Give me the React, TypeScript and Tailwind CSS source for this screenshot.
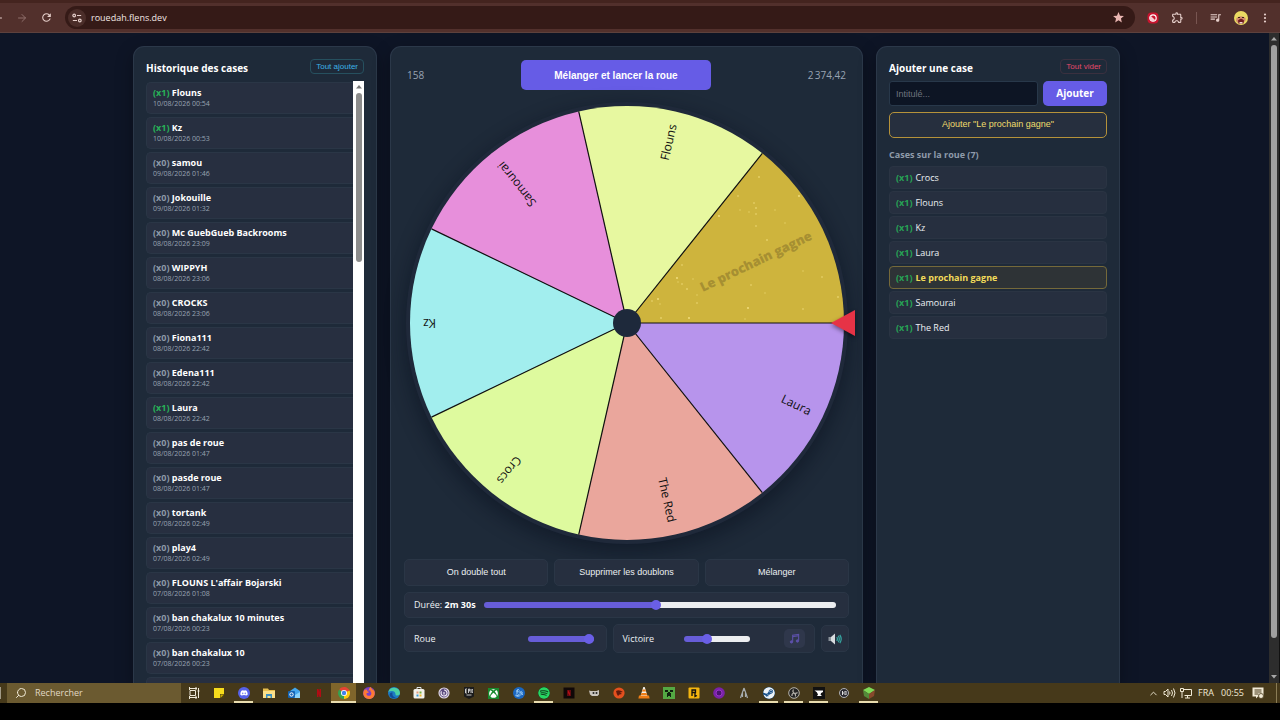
import { useState } from "react";
import type { ReactNode } from "react";
import { ArrowLeft, ArrowRight, ChevronUp, EllipsisVertical, Search } from "lucide-react";
import { FaBattleNet, FaDiscord, FaFirefoxBrowser, FaSpotify, FaSteam, FaXbox } from "react-icons/fa6";
import { MdOutlineExtension, MdQueueMusic, MdRefresh, MdStar } from "react-icons/md";

type HistoryEntry = { count: number; name: string; date: string };

const history: HistoryEntry[] = [
  { count: 1, name: "Flouns", date: "10/08/2026 00:54" },
  { count: 1, name: "Kz", date: "10/08/2026 00:53" },
  { count: 0, name: "samou", date: "09/08/2026 01:46" },
  { count: 0, name: "Jokouille", date: "09/08/2026 01:32" },
  { count: 0, name: "Mc GuebGueb Backrooms", date: "08/08/2026 23:09" },
  { count: 0, name: "WIPPYH", date: "08/08/2026 23:06" },
  { count: 0, name: "CROCKS", date: "08/08/2026 23:06" },
  { count: 0, name: "Fiona111", date: "08/08/2026 22:42" },
  { count: 0, name: "Edena111", date: "08/08/2026 22:42" },
  { count: 1, name: "Laura", date: "08/08/2026 22:42" },
  { count: 0, name: "pas de roue", date: "08/08/2026 01:47" },
  { count: 0, name: "pasde roue", date: "08/08/2026 01:47" },
  { count: 0, name: "tortank", date: "07/08/2026 02:49" },
  { count: 0, name: "play4", date: "07/08/2026 02:49" },
  { count: 0, name: "FLOUNS L'affair Bojarski", date: "07/08/2026 01:08" },
  { count: 0, name: "ban chakalux 10 minutes", date: "07/08/2026 00:23" },
  { count: 0, name: "ban chakalux 10", date: "07/08/2026 00:23" }
];

const GOLD = "Le prochain gagne";

const entries = ["Crocs", "Flouns", "Kz", "Laura", GOLD, "Samourai", "The Red"];

// clockwise, starting at the pointer
const slices = [
  { label: "Laura", color: "#b794ec" },
  { label: "The Red", color: "#eaa69c" },
  { label: "Crocs", color: "#defa9e" },
  { label: "Kz", color: "#a2eeee" },
  { label: "Samourai", color: "#e78fdb" },
  { label: "Flouns", color: "#e7f8a0" },
  { label: GOLD, color: "#ceb43d" }
];

const sparkles = [
  [349, 71], [328, 90], [330, 104], [309, 110], [339, 106], [344, 97], [346, 102], [346, 108], [365, 104],
  [389, 90], [375, 117], [346, 120], [357, 134], [272, 159], [268, 176], [267, 172], [283, 173], [272, 178],
  [277, 183], [287, 197], [287, 189], [248, 193], [250, 198], [242, 195], [251, 212], [341, 179], [355, 187],
  [338, 202], [393, 165], [412, 171], [428, 191], [393, 203], [335, 213], [279, 212]
];

function point(radius: number, degrees: number) {
  const rad = (degrees * Math.PI) / 180;
  return `${217 + radius * Math.cos(rad)} ${217 + radius * Math.sin(rad)}`;
}

function Wheel() {
  const step = 360 / slices.length;

  return (
    <svg
      viewBox="0 0 434 434"
      role="img"
      aria-label="Roue"
      className="w-[434px] max-w-full overflow-visible rounded-full shadow-[0_0_0_4px_#1f293a,0_7px_20px_5px_rgba(5,10,25,0.45)]"
    >
      {slices.map((slice, i) => (
        <path
          key={slice.label}
          d={`M217 217 L${point(217, i * step)} A217 217 0 0 1 ${point(217, (i + 1) * step)} Z`}
          fill={slice.color}
        />
      ))}
      {slices.map((slice, i) => (
        <path key={slice.label} d={`M217 217 L${point(217, i * step)}`} stroke="#111" strokeWidth="1.2" />
      ))}
      {sparkles.map(([x, y], i) => (
        <circle key={i} cx={x} cy={y} r={i % 3 === 0 ? 0.9 : 0.7} fill="#f8e68a" opacity={i % 2 ? 0.9 : 0.6} />
      ))}
      {slices.map((slice, i) => (
        <text
          key={slice.label}
          x="421"
          y="217"
          dominantBaseline="central"
          textAnchor="end"
          transform={`rotate(${(i + 0.5) * step} 217 217)`}
          className={slice.label === GOLD ? "text-[13px] font-extrabold" : "text-[12px] font-medium"}
          fill={slice.label === GOLD ? "#a68f32" : "#111"}
        >
          {slice.label}
        </text>
      ))}
      <circle cx="217" cy="217" r="14" fill="#1e293b" />
      <path d="M421 217 L445 204 V230 Z" fill="#e63346" className="drop-shadow-[0_2px_2px_rgba(0,0,0,0.45)]" />
    </svg>
  );
}

type SliderProps = { label: string; value: number; onChange: (value: number) => void; className: string };

function Slider({ label, value, onChange, className }: SliderProps) {
  return (
    <input
      type="range"
      aria-label={label}
      min={0}
      max={100}
      value={value}
      onChange={(e) => onChange(Number(e.target.value))}
      style={{ backgroundImage: `linear-gradient(to right, #675dd8 ${value}%, #eceef0 ${value}%)` }}
      className={`h-[6px] appearance-none rounded-full [&::-webkit-slider-thumb]:size-[10px] [&::-webkit-slider-thumb]:appearance-none [&::-webkit-slider-thumb]:rounded-full [&::-webkit-slider-thumb]:bg-[#6a5fe6] ${className}`}
    />
  );
}

function BrowserBar() {
  return (
    <header className="flex h-[33px] shrink-0 items-center border-t-[3px] border-b border-t-[#44241f] border-b-[#5d413d] bg-[#52302c] text-[#e6cfcb]">
      <button aria-label="Précédente" className="-ml-2 w-3">
        <ArrowLeft className="size-3" />
      </button>
      <button aria-label="Suivante" className="ml-3 text-[#8f6f6b]">
        <ArrowRight className="size-3" />
      </button>
      <button aria-label="Actualiser" className="ml-3">
        <MdRefresh className="size-[13px]" />
      </button>
      <div className="ml-3 flex h-[23px] flex-1 items-center rounded-full bg-[#351a17] px-[3px]">
        <button aria-label="Infos sur le site" className="flex size-[18px] items-center justify-center rounded-full bg-[#4b2d29]">
          <svg viewBox="0 0 12 12" className="size-[10px]" fill="none" stroke="currentColor" strokeWidth="1.4">
            <circle cx="2.6" cy="3" r="1.6" />
            <path d="M6 3h5M1 9h5" />
            <circle cx="9.4" cy="9" r="1.6" />
          </svg>
        </button>
        <input
          aria-label="Adresse"
          defaultValue="rouedah.flens.dev"
          className="ml-[5px] flex-1 text-[9px] text-[#f1e6e4] outline-none"
        />
        <button aria-label="Favori" className="mr-[7px] text-[#eab6b2]">
          <MdStar className="size-[13px]" />
        </button>
      </div>
      <button aria-label="Extension" className="ml-3">
        <svg viewBox="0 0 12 12" className="size-3">
          <rect x=".5" y=".5" width="11" height="11" rx="4" fill="#c9142f" />
          <circle cx="6" cy="6" r="3.2" fill="none" stroke="#fff" strokeWidth="1.2" />
          <path d="M3.700 3.700L8.300 8.300A3.200 3.200 0 0 1 3.700 3.700z" fill="#f6c9cf" />
        </svg>
      </button>
      <button aria-label="Extensions" className="ml-3">
        <MdOutlineExtension className="size-[13px]" />
      </button>
      <span className="mx-3 h-3 w-px bg-[#785551]" />
      <button aria-label="Multimédia">
        <MdQueueMusic className="size-[13px]" />
      </button>
      <button aria-label="Profil" className="ml-3">
        <svg viewBox="0 0 14 14" className="size-[14px]">
          <circle cx="7" cy="7" r="7" fill="#eadb62" />
          <path d="M2.500 7q4.500-3.500 9 0v2.500L8 13H5l-3-3z" fill="#d08a6c" />
          <path d="M4 9.500q3-3.500 6 0l-.5 3h-5z" fill="#6f1c20" />
          <path d="M5.500 11h3v1.500h-3z" fill="#f2dcd4" />
          <path d="M4 6.500h2M8 6.500h2" stroke="#3a2418" />
        </svg>
      </button>
      <button aria-label="Menu" className="mr-[9px] ml-[11px]">
        <EllipsisVertical className="size-3" strokeWidth={2.4} />
      </button>
    </header>
  );
}

const card = "rounded-t-[11px] border border-b-0 border-[#2b3849] bg-[#1e2a39] shadow-[0_6px_18px_rgba(0,0,0,0.3)]";
const tile = "rounded-[5px] border border-[#2a3646] bg-[#262f3f]";
const arial = "font-['Liberation_Sans',Arial,sans-serif]";

function HistoryPanel() {
  return (
    <section className={`flex min-h-0 flex-col px-3 pt-3 ${card}`}>
      <div className="flex h-[22px] shrink-0 items-start justify-between">
        <h2 className="text-[10px] leading-[18px] font-bold text-white">Historique des cases</h2>
        <button className={`h-[15px] rounded-[4px] border border-[#26505f] px-[5px] text-[8px] leading-none text-[#3db2e6] ${arial}`}>
          Tout ajouter
        </button>
      </div>
      <div className="flex min-h-0 flex-1">
        <ul className="flex min-w-0 flex-1 flex-col gap-[3px] overflow-hidden pt-px">
          {history.map((entry, i) => (
            <li key={i} className="shrink-0 rounded-l-[5px] border border-r-0 border-[#2a3646] bg-[#272f40] px-[6px] py-1">
              <p className="text-[9px] leading-3 font-bold text-white">
                <span className={entry.count ? "text-[#27b358]" : "text-[#8d99a8]"}>(x{entry.count})</span> {entry.name}
              </p>
              <p className="text-[7px] leading-[10px] text-[#98a3b2]">{entry.date}</p>
            </li>
          ))}
          <li className="h-8 shrink-0 rounded-l-[5px] border border-r-0 border-[#2a3646] bg-[#272f40]" />
        </ul>
        <div className="flex w-[11px] flex-col items-center bg-white">
          <svg viewBox="0 0 10 6" className="mt-1 w-[6px]">
            <path d="M5 0L10 6H0Z" fill="#777" />
          </svg>
          <div className="mt-1 h-[169px] w-[6px] rounded-full bg-[#8c8c8c]" />
        </div>
      </div>
    </section>
  );
}

function WheelPanel() {
  const [duration, setDuration] = useState(49);
  const [wheelVolume, setWheelVolume] = useState(100);
  const [winVolume, setWinVolume] = useState(32);

  return (
    <section className={`flex min-h-0 flex-col px-[13px] pt-[13px] ${card}`}>
      <div className="flex items-center justify-between px-[3px] text-[10px] font-medium text-[#98a3b2]">
        <span>158</span>
        <button className={`h-[30px] w-[190px] rounded-[5px] bg-[#665ce6] text-[10px] font-bold text-white ${arial}`}>
          Mélanger et lancer la roue
        </button>
        <span>2&#8239;374,42</span>
      </div>
      <div className="mt-4 flex shrink-0 justify-center">
        <Wheel />
      </div>
      <div className={`mt-[19px] grid grid-cols-3 gap-[6px] text-[9px] text-[#eceff3] ${arial}`}>
        <button className={`h-[27px] ${tile}`}>On double tout</button>
        <button className={`h-[27px] ${tile}`}>Supprimer les doublons</button>
        <button className={`h-[27px] ${tile}`}>Mélanger</button>
      </div>
      <div className={`mt-[6px] flex h-[26px] shrink-0 items-center pr-3 pl-[9px] text-[9px] text-[#eceff3] ${tile}`}>
        <span>
          Durée: <strong className="text-white">2m 30s</strong>
        </span>
        <Slider label="Durée" value={duration} onChange={setDuration} className="ml-2 min-w-0 flex-1" />
      </div>
      <div className="mt-[6px] grid shrink-0 grid-cols-[1fr_1fr_28px] items-center gap-[6px] text-[9px] text-[#eceff3]">
        <div className={`flex h-[27px] items-center justify-between pr-3 pl-[9px] ${tile}`}>
          <span>Roue</span>
          <Slider label="Volume de la roue" value={wheelVolume} onChange={setWheelVolume} className="w-[66px]" />
        </div>
        <div className={`flex h-[29px] items-center px-[9px] ${tile}`}>
          <span className="flex-1">Victoire</span>
          <Slider label="Volume de la victoire" value={winVolume} onChange={setWinVolume} className="w-[66px]" />
          <button aria-label="Musique de victoire" className="ml-[34px] flex h-[19px] w-[21px] items-center justify-center rounded-[5px] bg-[#2f374b]">
            <svg viewBox="0 0 12 12" className="size-[11px]" fill="#5c50a8" stroke="#5c50a8">
              <path d="M4 9.500V2.500L10.500 1.500V8.500" fill="none" strokeWidth="1.2" />
              <path d="M4 4L10.500 3" strokeWidth="1.2" />
              <circle cx="2.700" cy="9.700" r="1.300" />
              <circle cx="9.200" cy="8.700" r="1.300" />
            </svg>
          </button>
        </div>
        <button aria-label="Couper le son" className={`flex h-[27px] items-center justify-center ${tile}`}>
          <svg viewBox="0 0 14 12" className="w-[14px]">
            <path d="M.5 4H3v4H.5z" fill="#8c949c" />
            <path d="M3 4L7 .5v11L3 8z" fill="#d7dbdf" />
            <path d="M8.800 4q1.200 2 0 4M10.300 2.800q2 3.200 0 6.400M11.800 1.800q2.800 4.200 0 8.400" fill="none" stroke="#36a9a4" strokeWidth="1.2" />
          </svg>
        </button>
      </div>
    </section>
  );
}

function EntriesPanel() {
  const [title, setTitle] = useState("");

  return (
    <section className={`flex min-h-0 flex-col px-3 pt-3 ${card}`}>
      <div className="flex h-[22px] shrink-0 items-start justify-between">
        <h2 className="text-[10px] leading-[18px] font-bold text-white">Ajouter une case</h2>
        <button className={`h-[15px] rounded-[4px] border border-[#3a303f] px-[5px] text-[8px] leading-none text-[#e2496a] ${arial}`}>
          Tout vider
        </button>
      </div>
      <form className="flex gap-[5px]" onSubmit={(e) => e.preventDefault()}>
        <input
          aria-label="Intitulé"
          placeholder="Intitulé..."
          value={title}
          onChange={(e) => setTitle(e.target.value)}
          className={`h-[25px] min-w-0 flex-1 rounded-[3px] border border-[#28384a] bg-[#0d1524] px-[6px] text-[9px] text-white placeholder:text-[#6d747e] ${arial}`}
        />
        <button className="h-[25px] w-16 rounded-[5px] bg-[#665ce6] text-[10px] font-bold text-white">Ajouter</button>
      </form>
      <button className={`mt-[6px] h-[26px] shrink-0 rounded-[5px] border border-[#b5923a] bg-[#262f3e] text-[9px] text-[#f0dc6c] ${arial}`}>
        Ajouter "Le prochain gagne"
      </button>
      <h3 className="mt-[10px] text-[9px] leading-[14px] font-bold text-[#8f9bab]">Cases sur la roue (7)</h3>
      <ul className="mt-1 flex flex-col gap-[2px]">
        {entries.map((name) => (
          <li
            key={name}
            className={`flex h-[23px] items-center gap-[3px] rounded-[4px] border px-[6px] text-[9px] ${
              name === GOLD ? "border-[#75693a] bg-[#2e3336] font-bold text-[#f3dc5a]" : "border-[#2a3443] bg-[#262f3f] text-[#eceff3]"
            }`}
          >
            <span className="font-bold text-[#27a355]">(x1)</span>
            {name}
          </li>
        ))}
      </ul>
    </section>
  );
}

function Glyph({ children }: { children: ReactNode }) {
  return (
    <svg viewBox="0 0 12 12" className="size-3">
      {children}
    </svg>
  );
}

type TaskbarApp = { name: string; icon: ReactNode; open?: boolean; active?: boolean };

const apps: TaskbarApp[] = [
  {
    name: "Vue des tâches",
    icon: (
      <Glyph>
        <path d="M1 1.500h8M1 10.500h8M2 3.500h5.500v5H2zM1.500 0v3M8 0v3M1.500 9v3M8 9v3M10.500 1v10M9.500 4h2" fill="none" stroke="#efe9d8" strokeWidth="1" />
      </Glyph>
    )
  },
  {
    name: "Pense-bête",
    icon: (
      <Glyph>
        <path d="M1 1h10v6.500L7.500 11H1z" fill="#f7dc1c" />
        <path d="M11 7v4H7V7z" fill="#4b4013" />
        <path d="M7.500 11V7.500H11z" fill="#c9a700" />
      </Glyph>
    )
  },
  {
    name: "Discord",
    open: true,
    icon: (
      <span className="flex size-3 items-center justify-center rounded-full bg-[#5661e8]">
        <FaDiscord className="size-2 text-white" />
      </span>
    )
  },
  {
    name: "Explorateur",
    icon: (
      <Glyph>
        <path d="M0 1.500h5l1 1.500h6v8H0z" fill="#e8bf4f" />
        <path d="M0 4h12v7H0z" fill="#fbe08a" />
        <path d="M3 7h6v4H7.500V9h-3v2H3z" fill="#3a8fc2" />
      </Glyph>
    )
  },
  {
    name: "Outlook",
    icon: (
      <Glyph>
        <path d="M2 4l5-3.500L12 4v7H2z" fill="#44a6ec" />
        <path d="M2 11l10-6v6z" fill="#8bd3fa" />
        <rect y="4" width="7" height="7" rx="1" fill="#1464b4" />
        <circle cx="3.500" cy="7.500" r="1.700" fill="none" stroke="#fff" />
      </Glyph>
    )
  },
  {
    name: "Netflix",
    icon: (
      <Glyph>
        <path d="M4 2h1.500l1 3V2H8v8H6.500l-1-3v3H4z" fill="#b10c14" />
      </Glyph>
    )
  },
  {
    name: "Chrome",
    open: true,
    active: true,
    icon: (
      <Glyph>
        <path d="M6 6L1.200 2.500A6 6 0 0 1 11.500 3.500z" fill="#e64234" />
        <path d="M6 6L11.500 3.500A6 6 0 0 1 6 12z" fill="#fac90f" />
        <path d="M6 6V12A6 6 0 0 1 1.200 2.500z" fill="#33a250" />
        <circle cx="6" cy="6" r="3" fill="#fff" />
        <circle cx="6" cy="6" r="2.200" fill="#4182ec" />
      </Glyph>
    )
  },
  {
    name: "Firefox",
    icon: (
      <span className="flex size-3 items-center justify-center rounded-full bg-[#7b3fc9]">
        <FaFirefoxBrowser className="size-3 text-[#ff7a33]" />
      </span>
    )
  },
  {
    name: "Edge",
    icon: (
      <Glyph>
        <circle cx="6" cy="6" r="6" fill="#1d7bc4" />
        <path d="M.3 5A6 6 0 0 1 12 6q0 2.500-3 2.500-2 0-1.500-1.500Q7 4 4 4 1.500 4 .3 5z" fill="#4bd0a5" />
        <path d="M4.500 5.500q-1 4 3.500 5.500Q3 12 1.500 8q0-3 3-2.500z" fill="#124b97" />
      </Glyph>
    )
  },
  {
    name: "Microsoft Store",
    icon: (
      <Glyph>
        <path d="M4 2V.5h4V2" fill="none" stroke="#dfe5e8" />
        <rect x=".5" y="2" width="11" height="9.500" rx="1.500" fill="#f3f1ea" />
        <path d="M3.500 4.500h2v2h-2z" fill="#e39b7c" />
        <path d="M6.500 4.500h2v2h-2z" fill="#77b03d" />
        <path d="M3.500 7.500h2v2h-2z" fill="#3498d8" />
        <path d="M6.500 7.500h2v2h-2z" fill="#edb72b" />
      </Glyph>
    )
  },
  {
    name: "Insta360",
    icon: (
      <Glyph>
        <circle cx="6" cy="6" r="5" fill="#5c4c80" stroke="#ded6e6" strokeWidth="1.200" />
        <path d="M6 3a3 3 0 1 1-2.500 1.400M6 5v2.500" fill="none" stroke="#f1ebf5" strokeWidth="1.200" />
      </Glyph>
    )
  },
  {
    name: "Epic Games",
    icon: (
      <Glyph>
        <path d="M1 0h10v9.500L6 12 1 9.500z" fill="#1c1c1c" />
        <path d="M2.500 2v4M2.500 2h1.500M2.500 4h1.500M2.500 6h1.500M5.500 6V2h1.200v2H5.500M8 2v4M10 2.500H9.200v3H10M3.500 8h5" fill="none" stroke="#eee" strokeWidth=".8" />
      </Glyph>
    )
  },
  {
    name: "Xbox",
    icon: (
      <span className="flex size-[11px] items-center justify-center bg-[#188a2d]">
        <FaXbox className="size-[9px] text-white" />
      </span>
    )
  },
  {
    name: "Battle.net",
    icon: (
      <span className="flex size-3 items-center justify-center rounded-full bg-[#1a66c0]">
        <FaBattleNet className="size-[9px] text-[#b7e2ff]" />
      </span>
    )
  },
  { name: "Spotify", open: true, icon: <FaSpotify className="size-3 rounded-full bg-[#123f20] text-[#27d562]" /> },
  {
    name: "Netflix bureau",
    icon: (
      <Glyph>
        <rect x=".5" y=".5" width="11" height="11" fill="#100808" />
        <path d="M4.500 3h1l1 3V3h1v6h-1l-1-3v3h-1z" fill="#b50e17" />
      </Glyph>
    )
  },
  {
    name: "Manette",
    icon: (
      <Glyph>
        <path d="M1 3.500l2 .5h5.500L11 3v4.500L9.500 9H4L2 7.500z" fill="#c9c4bd" />
        <circle cx="5.500" cy="6" r="1" fill="#222" />
        <circle cx="8.500" cy="6" r="1" fill="#222" />
      </Glyph>
    )
  },
  {
    name: "Dofus",
    icon: (
      <Glyph>
        <circle cx="6" cy="6" r="5.600" fill="#e5501e" />
        <path d="M3 4q3-2 7 1L7 5.500l2 1.500q-3 0-4 2Q3.500 7 3 4z" fill="#611a0d" />
      </Glyph>
    )
  },
  {
    name: "VLC",
    icon: (
      <Glyph>
        <path d="M5.300 0h1.400L9.500 9h-7z" fill="#f1f1ec" />
        <path d="M4.700 2.500h2.600l.7 2H4zM3.500 6h5l.7 2H2.800z" fill="#ee7d15" />
        <path d="M1 8.500h10l.6 3H.4z" fill="#ee7d15" />
      </Glyph>
    )
  },
  {
    name: "Minecraft",
    icon: (
      <Glyph>
        <path d="M0 0h12v12H0z" fill="#54a843" />
        <path d="M2 3h3v2H2zM7 3h3v2H7zM5 5h2v1h1v4H7V9H5v1H4V6h1z" fill="#0f220e" />
      </Glyph>
    )
  },
  {
    name: "Rockstar",
    icon: (
      <Glyph>
        <rect x=".5" y=".5" width="11" height="11" rx="1" fill="#f4b50f" />
        <path d="M4 9V3h3.500v2.500H4M7 5.500v4l2-1" fill="none" stroke="#111" strokeWidth="1.300" />
      </Glyph>
    )
  },
  {
    name: "Tor",
    icon: (
      <Glyph>
        <circle cx="6" cy="6" r="5.800" fill="#7a22a8" />
        <circle cx="6" cy="6" r="3" fill="#4a1470" stroke="#9a35c8" />
      </Glyph>
    )
  },
  {
    name: "Ark",
    icon: (
      <Glyph>
        <path d="M6 1L2.500 11M6 1l3.500 10M6 1v3M4.500 6v4M7.500 6v4" fill="none" stroke="#a7adb0" strokeWidth="1.200" />
      </Glyph>
    )
  },
  { name: "Steam", open: true, icon: <FaSteam className="size-3 rounded-full bg-[#18518b] text-[#eef4f8]" /> },
  {
    name: "OBS",
    open: true,
    icon: (
      <Glyph>
        <circle cx="6" cy="6" r="5.300" fill="#242424" stroke="#b4b1aa" />
        <path d="M5.500 2.500q-1.500 2 .5 3.500 2 .8 3.500-.5M6 6q-2.500.5-2 3M6 6q2 1 1.500 3.500" fill="none" stroke="#b4b1aa" strokeWidth="1.100" />
      </Glyph>
    )
  },
  {
    name: "Enclume",
    open: true,
    icon: (
      <Glyph>
        <path d="M0 0h12v12H0z" fill="#111" />
        <path d="M1.500 3.500H10v1.500Q7.500 5.500 7.500 7.500l1.500 1.500H4L5 7.500Q4.500 5 1.500 3.500z" fill="#fff" />
      </Glyph>
    )
  },
  {
    name: "Moulinette",
    icon: (
      <Glyph>
        <circle cx="6" cy="6" r="4.500" fill="#2c2c33" stroke="#aeb0b4" />
        <path d="M4.500 4v4M7.500 4L5.500 6l2 2M8 4v4" fill="none" stroke="#e1e1e1" />
      </Glyph>
    )
  },
  {
    name: "Serveur Minecraft",
    open: true,
    icon: (
      <Glyph>
        <path d="M0 3l6-3 6 3-6 4z" fill="#7ed957" />
        <path d="M0 3l6 4v5L1 9z" fill="#54893a" />
        <path d="M12 3L6 7v5l5-3z" fill="#87492b" />
      </Glyph>
    )
  }
];

function Taskbar() {
  return (
    <footer className="flex h-5 shrink-0 items-center bg-[#46391a] text-[9px] text-[#f1ead6]">
      <span className="h-3 w-px bg-[#a29a86]" />
      <label className="ml-[6px] flex h-full w-[174px] items-center gap-2 bg-[#6b5a30] px-2">
        <Search className="size-3 -scale-x-100" />
        <input
          type="search"
          aria-label="Rechercher"
          placeholder="Rechercher"
          className="min-w-0 flex-1 text-[9px] outline-none placeholder:text-[#e0d9c4]"
        />
      </label>
      <nav className="flex h-full">
        {apps.map((app) => (
          <button
            key={app.name}
            aria-label={app.name}
            className={`flex w-[25px] justify-center ${app.active ? "bg-[#80652b]" : ""}`}
          >
            <span
              className={`flex h-5 items-center justify-center ${app.active ? "w-full" : "w-[19px]"} ${
                app.open ? "shadow-[inset_0_-2px_0_#e9dcae]" : ""
              }`}
            >
              {app.icon}
            </span>
          </button>
        ))}
      </nav>
      <div className="ml-auto flex h-full items-center">
        <button aria-label="Icônes cachées">
          <ChevronUp className="size-[11px]" />
        </button>
        <button aria-label="Son" className="ml-[4px]">
          <svg viewBox="0 0 13 12" className="w-[13px]" fill="none" stroke="currentColor">
            <path d="M1 4.500h1.500L5 2v8L2.500 7.500H1zM6.500 4.500q1 1.500 0 3M8.500 3q2 3 0 6M10.500 1.500q3 4.500 0 9" />
          </svg>
        </button>
        <button aria-label="Réseau" className="ml-[4px]">
          <svg viewBox="0 0 12 12" className="size-3" fill="none" stroke="currentColor">
            <path d="M3.500 2.500h8v6h-7M5 11h5M7.500 8.500V11M.5 1.500h3v3h-3zM2 4.500V11" />
          </svg>
        </button>
        <span className="ml-[6px] w-[18px]">FRA</span>
        <time className="ml-[5px] w-[24px]">00:55</time>
        <button aria-label="Notifications" className="ml-[7px]">
          <svg viewBox="0 0 12 12" className="size-3">
            <path d="M.5.5h11v9H6L4 11.500v-2H.5z" fill="currentColor" />
            <path d="M2.500 3h7M2.500 5h7M2.500 7h4" stroke="#46391a" />
            <circle cx="9" cy="9" r="2.500" fill="currentColor" stroke="#46391a" strokeWidth=".8" />
          </svg>
        </button>
        <span className="ml-3 h-full w-px bg-[#8a7c55]" />
        <span className="w-[3px]" />
      </div>
    </footer>
  );
}

export default function App() {
  return (
    <div className="flex h-screen flex-col overflow-hidden bg-black pb-[17px] font-['Open_Sans','Noto_Sans',sans-serif]">
      <BrowserBar />
      <div className="flex min-h-0 flex-1 bg-[#0e1526]">
        <main className="min-w-0 flex-1 pt-[13px] pr-4">
          <div className="mx-auto grid h-full max-w-[987px] grid-cols-[244px_minmax(0,1fr)_244px] grid-rows-[minmax(0,1fr)] gap-[13px]">
            <HistoryPanel />
            <WheelPanel />
            <EntriesPanel />
          </div>
        </main>
        <div className="flex w-[11px] flex-col items-center border-r border-[#111] bg-[#2d2d2d] py-1">
          <svg viewBox="0 0 10 6" className="w-[6px]">
            <path d="M5 0L10 6H0Z" fill="#a8a8a8" />
          </svg>
          <div className="mt-1 mb-[37px] w-[6px] flex-1 rounded-full bg-[#9f9f9f]" />
          <svg viewBox="0 0 10 6" className="w-[6px]">
            <path d="M5 6L10 0H0Z" fill="#a8a8a8" />
          </svg>
        </div>
      </div>
      <Taskbar />
    </div>
  );
}
